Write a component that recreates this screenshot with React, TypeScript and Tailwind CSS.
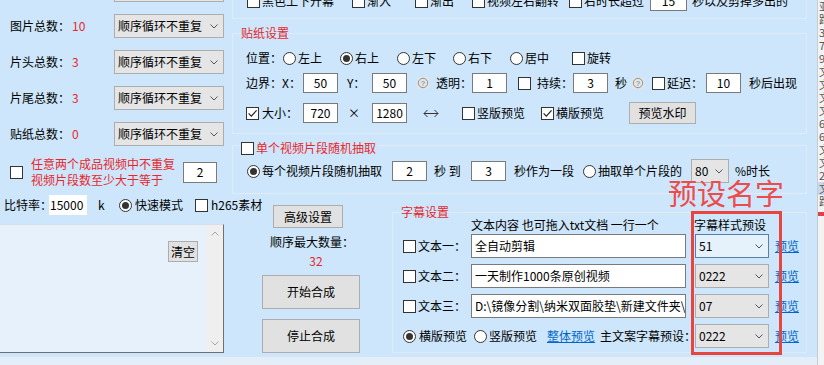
import React from 'react';

type Props = { className?: string; children?: React.ReactNode };

function Check({ on = false, className = '' }: { on?: boolean; className?: string }) {
  return (
    <span className={`flex h-[13px] w-[13px] shrink-0 items-center justify-center border border-[#333] bg-white ${className}`}>
      {on && (
        <svg width="11" height="11" viewBox="0 0 11 11">
          <path d="M1.6 5.4 L4.3 8.1 L9.6 2.4" fill="none" stroke="#222" strokeWidth="1.2" />
        </svg>
      )}
    </span>
  );
}

function Radio({ on = false, className = '' }: { on?: boolean; className?: string }) {
  return (
    <span className={`flex h-[13px] w-[13px] shrink-0 items-center justify-center rounded-full border border-[#333] bg-white ${className}`}>
      {on && <span className="h-[7px] w-[7px] rounded-full bg-[#333]" />}
    </span>
  );
}

function Field({ className = '', children }: Props) {
  return (
    <span className={`flex shrink-0 items-center border border-[#7a7a7a] bg-white ${className}`}>{children}</span>
  );
}

function Chevron() {
  return (
    <svg width="8" height="5" viewBox="0 0 8 5" className="shrink-0">
      <path d="M0.5 0.5 L4 4 L7.5 0.5" fill="none" stroke="#555" strokeWidth="1" />
    </svg>
  );
}

function Combo({ value, active = false, className = '' }: { value: string; active?: boolean; className?: string }) {
  return (
    <span
      className={`flex h-[24px] shrink-0 items-center justify-between border pl-[3px] pr-[5px] ${
        active ? 'border-[#5a7fa8] bg-[#e5f1fb]' : 'border-[#adadad] bg-[#e5e5e5]'
      } ${className}`}
    >
      <span className="whitespace-nowrap">{value}</span>
      <Chevron />
    </span>
  );
}

function Btn({ className = '', children }: Props) {
  return (
    <button type="button" className={`flex shrink-0 items-center justify-center border border-[#adadad] bg-[#e1e1e1] ${className}`}>
      {children}
    </button>
  );
}

function Help({ className = '' }: { className?: string }) {
  return (
    <svg className={`shrink-0 ${className}`} width="12" height="12" viewBox="0 0 12 12">
      <rect width="12" height="12" fill="#e2e4e6" />
      <circle cx="6" cy="6" r="4.7" fill="none" stroke="#8a8a8a" strokeWidth="0.9" />
      <text x="6" y="8.5" textAnchor="middle" fontSize="7" fill="#777" fontFamily="Liberation Sans, sans-serif">
        ?
      </text>
    </svg>
  );
}

const counts = [
  ['图片总数：', '10'],
  ['片头总数：', '3'],
  ['片尾总数：', '3'],
  ['贴纸总数：', '0'],
];

function LeftPanel() {
  return (
    <div className="flex w-[232px] shrink-0 flex-col">
      <div className="mt-[-22px] flex h-[24px] items-center">
        <Combo value="顺序循环不重复" className="ml-[114px] w-[110px]" />
      </div>
      {counts.map(([label, n]) => (
        <div key={label} className="mt-[12px] flex h-[24px] items-center">
          <span className="ml-[10px] w-[62px] shrink-0">{label}</span>
          <span className="w-[42px] shrink-0 text-[#e8262b]">{n}</span>
          <Combo value="顺序循环不重复" className="w-[110px]" />
        </div>
      ))}
      <div className="mt-[10px] flex h-[32px] items-center">
        <Check className="ml-[10px]" />
        <span className="ml-[8px] w-[152px] shrink-0 text-[#e8262b]">
          任意两个成品视频中不重复
          <br />
          视频片段数至少大于等于
        </span>
        <Field className="h-[21px] w-[34px] justify-center">2</Field>
      </div>
      <div className="mt-[5px] flex h-[24px] items-center whitespace-nowrap">
        <span className="ml-[4px] w-[45px] shrink-0">比特率：</span>
        <span className="flex h-[20px] w-[38px] shrink-0 items-center bg-white pl-[1px]">15000</span>
        <span className="ml-[11px] w-[21px] shrink-0">k</span>
        <Radio on />
        <span className="ml-[3px] w-[48px] shrink-0">快速模式</span>
        <Check className="ml-[12px]" />
        <span className="ml-[3px]">h265素材</span>
      </div>
      <div className="mt-[7px] flex h-[129px] w-[224px] border-t border-r border-b border-t-[#d6dde4] border-r-[#707070] border-b-[#707070] bg-[#e6f1fc]">
        <div className="flex flex-1 items-start justify-end pr-[8px] pt-[16px]">
          <Btn className="h-[21px] w-[30px]">清空</Btn>
        </div>
        <div className="flex w-[17px] shrink-0 flex-col items-center justify-between bg-[#efefef] py-[6px]">
          <svg width="8" height="5" viewBox="0 0 8 5">
            <path d="M0.5 4.5 L4 1 L7.5 4.5" fill="none" stroke="#a6a6a6" strokeWidth="1" />
          </svg>
          <svg width="8" height="5" viewBox="0 0 8 5">
            <path d="M0.5 0.5 L4 4 L7.5 0.5" fill="none" stroke="#a6a6a6" strokeWidth="1" />
          </svg>
        </div>
      </div>
    </div>
  );
}

const subtitleRows = [
  { label: '文本一：', text: '全自动剪辑', preset: '51', active: true },
  { label: '文本二：', text: '一天制作1000条原创视频', preset: '0222', active: false },
  { label: '文本三：', text: 'D:\\镜像分割\\纳米双面胶垫\\新建文件夹\\视频素材', preset: '07', active: false },
];

function RightPanel() {
  return (
    <div className="flex w-[585px] shrink-0 flex-col">
      {/* cut-off group at the top */}
      <div className="h-[19px] w-[575px] border-x border-b border-[#e0ebf5]">
        <div className="mt-[-10px] flex h-[22px] items-center whitespace-nowrap">
          <Check className="ml-[14px]" />
          <span className="ml-[2px] w-[72px] shrink-0">黑色上下开幕</span>
          <Check className="ml-[18px]" />
          <span className="ml-[2px] w-[24px] shrink-0">渐入</span>
          <Check className="ml-[24px]" />
          <span className="ml-[2px] w-[24px] shrink-0">渐出</span>
          <Check className="ml-[18px]" />
          <span className="ml-[2px] w-[72px] shrink-0">视频左右翻转</span>
          <Check className="ml-[10px]" />
          <span className="ml-[2px] w-[60px] shrink-0">右时长超过</span>
          <Field className="ml-[6px] h-[20px] w-[37px] justify-center">15</Field>
          <span className="ml-[5px]">秒以及剪掉多出的</span>
        </div>
      </div>

      {/* 贴纸设置 */}
      <div className="relative mt-[14px] h-[101px] w-[575px] border border-[#e0ebf5]">
        <span className="absolute -top-[9px] left-[8px] bg-[#cde6fb] text-[#e8262b]">贴纸设置</span>
        <div className="mt-[14px] flex h-[20px] items-center whitespace-nowrap">
          <span className="ml-[13px] w-[37px] shrink-0">位置：</span>
          <Radio />
          <span className="ml-[2px] w-[24px] shrink-0">左上</span>
          <Radio on className="ml-[18px]" />
          <span className="ml-[2px] w-[24px] shrink-0">右上</span>
          <Radio className="ml-[18px]" />
          <span className="ml-[2px] w-[24px] shrink-0">左下</span>
          <Radio className="ml-[17px]" />
          <span className="ml-[2px] w-[24px] shrink-0">右下</span>
          <Radio className="ml-[18px]" />
          <span className="ml-[2px] w-[24px] shrink-0">居中</span>
          <Check className="ml-[23px]" />
          <span className="ml-[2px]">旋转</span>
        </div>
        <div className="mt-[5px] flex h-[20px] items-center whitespace-nowrap">
          <span className="ml-[13px] w-[57px] shrink-0">边界：X：</span>
          <Field className="h-[20px] w-[35px] justify-center">50</Field>
          <span className="ml-[9px] w-[25px] shrink-0">Y：</span>
          <Field className="h-[20px] w-[35px] justify-center">50</Field>
          <Help className="ml-[10px]" />
          <span className="ml-[7px] w-[36px] shrink-0">透明：</span>
          <Field className="h-[20px] w-[35px] justify-center">1</Field>
          <Check className="ml-[11px]" />
          <span className="ml-[6px] w-[36px] shrink-0">持续：</span>
          <Field className="h-[20px] w-[35px] justify-center">3</Field>
          <span className="ml-[7px] w-[12px] shrink-0">秒</span>
          <Help className="ml-[5px]" />
          <Check className="ml-[8px]" />
          <span className="ml-[2px] w-[39px] shrink-0">延迟：</span>
          <Field className="h-[20px] w-[35px] justify-center">10</Field>
          <span className="ml-[8px]">秒后出现</span>
        </div>
        <div className="mt-[9px] flex h-[22px] items-center whitespace-nowrap">
          <Check on className="ml-[13px]" />
          <span className="ml-[3px] w-[41px] shrink-0">大小：</span>
          <Field className="h-[20px] w-[35px] justify-center">720</Field>
          <span className="ml-[10px] w-[24px] shrink-0">×</span>
          <Field className="h-[20px] w-[35px] justify-center">1280</Field>
          <svg className="ml-[16px] shrink-0" width="16" height="9" viewBox="0 0 16 9">
            <path d="M1 4.5 H15 M4.5 1 L1 4.5 L4.5 8 M11.5 1 L15 4.5 L11.5 8" fill="none" stroke="#333" strokeWidth="1" />
          </svg>
          <Check className="ml-[23px]" />
          <span className="ml-[2px] w-[48px] shrink-0">竖版预览</span>
          <Check on className="ml-[16px]" />
          <span className="ml-[2px] w-[48px] shrink-0">横版预览</span>
          <Btn className="ml-[25px] h-[22px] w-[67px]">预览水印</Btn>
        </div>
      </div>

      {/* 单个视频片段随机抽取 */}
      <div className="relative mt-[11px] h-[49px] w-[575px] border border-[#e0ebf5]">
        <div className="absolute -top-[6px] left-[8px] flex h-[16px] items-center bg-[#cde6fb] pr-[1px]">
          <Check />
          <span className="ml-[2px] text-[#e8262b]">单个视频片段随机抽取</span>
        </div>
        <div className="mt-[13px] flex h-[24px] items-center whitespace-nowrap">
          <Radio on className="ml-[14px]" />
          <span className="ml-[2px] w-[120px] shrink-0">每个视频片段随机抽取</span>
          <Field className="ml-[10px] h-[20px] w-[35px] justify-center">2</Field>
          <span className="ml-[7px] w-[37px] shrink-0">秒 到</span>
          <Field className="h-[20px] w-[35px] justify-center">3</Field>
          <span className="ml-[8px] w-[60px] shrink-0">秒作为一段</span>
          <Radio className="ml-[9px]" />
          <span className="ml-[2px] w-[84px] shrink-0">抽取单个片段的</span>
          <Combo value="80" className="ml-[9px] w-[38px]" />
          <span className="ml-[6px]">%时长</span>
        </div>
      </div>

      <div className="mt-[11px] flex">
        {/* buttons */}
        <div className="flex w-[160px] shrink-0 flex-col items-start">
          <Btn className="ml-[41px] h-[23px] w-[70px]">高级设置</Btn>
          <span className="mt-[6px] w-full text-center">顺序最大数量：</span>
          <span className="mt-[3px] w-full pl-[8px] text-center text-[#e8262b]">32</span>
          <Btn className="ml-[30px] mt-[6px] h-[34px] w-[98px]">开始合成</Btn>
          <Btn className="ml-[30px] mt-[10px] h-[34px] w-[98px]">停止合成</Btn>
        </div>

        {/* 字幕设置 */}
        <div className="relative mt-[7px] h-[141px] w-[415px] border border-[#e0ebf5]">
          <span className="absolute -top-[9px] left-[8px] bg-[#cde6fb] text-[#e8262b]">字幕设置</span>
          <div className="mt-[4px] flex h-[16px] items-center whitespace-nowrap">
            <span className="ml-[78px] w-[223px] shrink-0">文本内容 也可拖入txt文档 一行一个</span>
            <span>字幕样式预设</span>
          </div>
          {subtitleRows.map((r, i) => (
            <div key={r.label} className={`${i === 0 ? 'mt-[1px]' : 'mt-[6px]'} flex h-[24px] items-center whitespace-nowrap`}>
              <Check className="ml-[10px]" />
              <span className="ml-[2px] w-[53px] shrink-0">{r.label}</span>
              <Field className="h-[24px] w-[215px] overflow-hidden pl-[3px]">{r.text}</Field>
              <Combo value={r.preset} active={r.active} className="ml-[9px] w-[74px]" />
              <a className="ml-[6px] text-[#0066cc] underline">预览</a>
            </div>
          ))}
          <div className="mt-[6px] flex h-[24px] items-center whitespace-nowrap">
            <Radio on className="ml-[10px]" />
            <span className="ml-[3px] w-[48px] shrink-0">横版预览</span>
            <Radio className="ml-[7px]" />
            <span className="ml-[2px] w-[48px] shrink-0">竖版预览</span>
            <a className="ml-[10px] w-[48px] shrink-0 text-[#0066cc] underline">整体预览</a>
            <span className="ml-[5px] w-[95px] shrink-0">主文案字幕预设：</span>
            <Combo value="0222" className="w-[74px]" />
            <a className="ml-[6px] text-[#0066cc] underline">预览</a>
          </div>
        </div>
      </div>
    </div>
  );
}

const stripChars = ['亚', '跑', '3', '7', '9', '文', '文', '文', '文', '6', '6', '文', '文', '2', '文', '跑'];

function SideStrip() {
  return (
    <div className="flex w-[7px] shrink-0 flex-col overflow-hidden border-l border-[#c4ccd4] bg-[#f3f3f3] text-[11px] leading-[13px] text-[#555]">
      {stripChars.map((c, i) => (
        <span key={i} className={`pl-[1px] ${i === 14 ? 'bg-[#c9d8ea]' : ''}`}>
          {c}
        </span>
      ))}
      <span className="mt-[4px] h-[4px] w-full bg-[#e0404a]" />
    </div>
  );
}

export default function App() {
  return (
    <div className="relative flex h-[365px] w-[824px] overflow-hidden bg-[#cde6fb] font-['Noto_Sans_CJK_SC',sans-serif] text-[12px] leading-[16px] text-black">
      <div className="flex w-[817px] shrink-0 flex-col">
        <div className="flex h-[357px] shrink-0">
          <LeftPanel />
          <RightPanel />
        </div>
        <div className="h-[8px] bg-[#e3eef8]" />
      </div>
      <SideStrip />

      {/* red annotation drawn over the screenshot */}
      <div className="pointer-events-none absolute left-[668px] top-[178px] whitespace-nowrap text-[29px] leading-[29px] text-[#ee4b4b]">
        预设名字
      </div>
      <div className="pointer-events-none absolute left-[691px] top-[211px] h-[144px] w-[91px] border-[3px] border-[#e8453f]" />
    </div>
  );
}
